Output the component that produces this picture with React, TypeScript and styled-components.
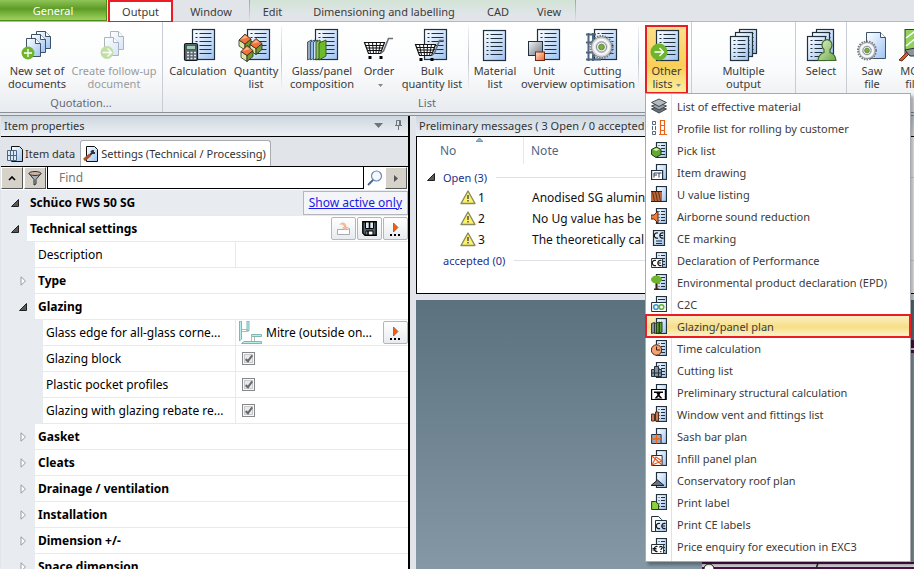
import React from 'react';
import styled, { createGlobalStyle, css } from 'styled-components';

const GlobalStyle = createGlobalStyle`
  *, *::before, *::after { box-sizing: border-box; }
  body { margin: 0; background: #e1e5e9; }
  button, input { font: inherit; color: inherit; margin: 0; }
  svg { display: block; flex: none; }
`;

/* ---------- shared drawing parts ---------- */

const INK = '#20303c';

const Defs = () => (
  <DefsSvg aria-hidden="true">
    <defs>
      <linearGradient id="paper" x1="0" y1="0" x2="1" y2="1">
        <stop offset="0.1" stopColor="#f6faff" />
        <stop offset="1" stopColor="#9dc3f2" />
      </linearGradient>
      <linearGradient id="steel" x1="0" y1="0" x2="1" y2="1">
        <stop offset="0" stopColor="#f4f5f6" />
        <stop offset="1" stopColor="#6c7581" />
      </linearGradient>
      <linearGradient id="orange" x1="0" y1="0" x2="1" y2="1">
        <stop offset="0" stopColor="#ffe3cf" />
        <stop offset="1" stopColor="#f0642a" />
      </linearGradient>
      <linearGradient id="leaf" x1="0" y1="0" x2="1" y2="1">
        <stop offset="0" stopColor="#e2f2d2" />
        <stop offset="1" stopColor="#6fa844" />
      </linearGradient>
    </defs>
  </DefsSvg>
);

type Box = { x: number; y: number; w: number; h: number };

const Sheet = ({ x, y, w, h }: Box) => {
  const rows: number[] = [];
  for (let r = y + 4; r < y + h - 2; r += 4) rows.push(r);
  return (
    <g>
      <rect x={x} y={y} width={w} height={h} fill="url(#paper)" stroke={INK} strokeWidth="1.2" />
      {rows.map((r) => (
        <path key={r} d={`M${x + 3} ${r}h2M${x + 7} ${r}h${w - 10}`} stroke={INK} />
      ))}
    </g>
  );
};

const Folded = ({ x, y, w, h }: Box) => (
  <g fill="url(#paper)" stroke="#3d5266" strokeWidth="1" strokeLinejoin="round">
    <path d={`M${x} ${y}h${w - 5}l5 5v${h - 5}h-${w}z`} />
    <path d={`M${x + w - 5} ${y}v5h5`} fill="#fff" />
  </g>
);

const Cube = ({ x, y }: { x: number; y: number }) => (
  <g stroke="#2b2b1c" strokeWidth="0.8" strokeLinejoin="round">
    <path d={`M${x - 6} ${y - 1}l6 4v6l-6-4z`} fill="#dbe8a6" />
    <path d={`M${x + 6} ${y - 2}l-6 5v6l6-5z`} fill="#6c9a2c" />
    <path d={`M${x - 6} ${y - 1}l6-6 6 5-6 5z`} fill="#f4733c" />
    <path d={`M${x - 4} ${y - 1.5}l4-4 3 2z`} fill="#ffb48c" stroke="none" />
  </g>
);

const Cart = ({ x, y }: { x: number; y: number }) => (
  <g transform={`translate(${x} ${y})`} fill="none" stroke="#111">
    <path d="M0 4.500h20l-4 11h-12z" fill="#fff" strokeWidth="1.200" />
    <path d="M1 7.500h18M2 10h16M3 12.500h14M4 4.500l2 11M8 4.500l1 11M12 4.500l-.5 11M16 4.500l-2 11" />
    <path d="M28.500.5h-4.500l-5 12.500-3 2.500" stroke="#67717c" strokeWidth="1.600" />
    <path d="M4 18h3v3H4zM15 18h3v3h-3z" fill="#000" stroke="none" />
  </g>
);

const Gear = ({ x, y, r }: { x: number; y: number; r: number }) => (
  <g>
    <circle cx={x} cy={y} r={r} fill="none" stroke="#777c82" strokeWidth="2" strokeDasharray="1.500 1.100" />
    <circle cx={x} cy={y} r={r - 0.8} fill="#d6d9dc" stroke="#85898e" strokeWidth="0.800" />
    <circle cx={x} cy={y} r={r * 0.66} fill="none" stroke="#f7f8f8" strokeWidth="2" />
    <circle cx={x} cy={y} r={r * 0.46} fill="#eceef0" stroke="#777c82" strokeWidth="0.800" />
    <circle cx={x} cy={y} r={r * 0.26} fill="#74b23a" stroke="#5f7a3f" strokeWidth="0.800" />
  </g>
);

const Badge = ({ x, y, r, arrow }: { x: number; y: number; r: number; arrow?: boolean }) => (
  <g>
    <circle cx={x} cy={y} r={r} fill="#6fb52c" />
    <path
      d={arrow ? `M${x - 4.5} ${y}h9m-4-4l4 4-4 4` : `M${x - 4} ${y}h8M${x} ${y - 4}v8`}
      fill="none"
      stroke="#fff"
      strokeWidth="1.3"
    />
  </g>
);

const SheetStack = () => (
  <g>
    <Sheet x={15.5} y={1.5} w={17} h={24} />
    <Sheet x={11.5} y={4.5} w={17} h={24} />
    <Sheet x={6.500} y={8.500} w={18} h={24} />
  </g>
);

const bigIcons: Record<string, React.ReactNode> = {
  newSet: (
    <>
      <Folded x={19.5} y={3.500} w={14} h={17} />
      <Folded x={14.5} y={6.5} w={14} h={18} />
      <Folded x={9.5} y={10.5} w={14} h={18} />
      <Badge x={11} y={25} r={6.500} />
    </>
  ),
  follow: (
    <g opacity="0.42">
      <Folded x={16.5} y={3.500} w={13} h={18} />
      <Folded x={10.500} y={9.5} w={14} h={18} />
      <Badge x={13} y={24.500} r={6.500} arrow />
    </g>
  ),
  calculation: (
    <>
      <Sheet x={14.500} y={1.500} w={22} h={30} />
      <rect x="6.500" y="15.500" width="13" height="17" rx="1.500" fill="#5d676f" stroke="#101820" strokeWidth="1.200" />
      <rect x="8.500" y="17.500" width="9" height="4" fill="#9ed0b4" stroke="#24382e" strokeWidth="0.600" />
      <path d="M9 24.500h9M9 27.500h9M9 30.500h9" stroke="#e4e7ea" strokeWidth="1.400" strokeDasharray="2 1.500" />
    </>
  ),
  quantity: (
    <>
      <Sheet x={11.500} y={1.500} w={22} h={30} />
      <Cube x={9} y={13} />
      <Cube x={20} y={17.5} />
      <Cube x={11} y={24.5} />
    </>
  ),
  glass: (
    <>
      <Sheet x={13.500} y={1.500} w={22} h={30} />
      <g stroke="#39506a" strokeWidth="0.9">
        <path d="M5.500 14l4-2v18l-4 2z" fill="#9aa9b7" />
        <path d="M8.500 14l4-2v18l-4 2z" fill="#8dbdf2" />
        <path d="M11.500 14l4-2v18l-4 2z" fill="#cfe0f4" />
        <path d="M14 14l4-2v18l-4 2z" fill="#8fc55c" stroke="#2f5414" />
        <path d="M17 15l7-3v16l-7 4z" fill="#6cbb2a" stroke="#2f5414" />
      </g>
    </>
  ),
  order: <Cart x={5.500} y={10} />,
  bulk: (
    <>
      <Sheet x={12.500} y={1.500} w={22} h={30} />
      <Cart x={3.500} y={12} />
    </>
  ),
  material: <Sheet x={8.500} y={2.500} w={22} h={30} />,
  unit: (
    <>
      <Sheet x={13.500} y={1.500} w={22} h={30} />
      <rect x="4.500" y="13.500" width="14" height="14" fill="url(#steel)" stroke={INK} />
      <rect x="11.500" y="24" width="9" height="8.500" fill="url(#orange)" stroke="#702c10" />
    </>
  ),
  cutting: (
    <>
      <Sheet x={11.500} y={1.500} w={22} h={30} />
      <path d="M5.500 5v28M10 5v28M3 6.500h10M3 14.500h8M3 24.500h8M3 31.500h15" stroke="#4d6580" strokeWidth="2" />
      <Gear x={18.500} y={19} r={11} />
    </>
  ),
  other: (
    <>
      <Sheet x={9.500} y={2.500} w={22} h={30} />
      <Badge x={12} y={24} r={8.500} arrow />
    </>
  ),
  multiple: <SheetStack />,
  select: (
    <>
      <SheetStack />
      <path d="M17 32.500c.5-5 3-7 6-8v-3a5 5.500 0 1 1 6 0v3c3.500 1 5.500 3 6 8z" fill="url(#leaf)" stroke="#3f6b28" strokeWidth="1.200" />
    </>
  ),
  saw: (
    <>
      <Folded x={14.5} y={4.500} w={19} h={26} />
      <Gear x={15} y={22.500} r={9} />
    </>
  ),
  machine: (
    <>
      <rect x="12" y="1.500" width="24" height="24" fill="#8fd15a" stroke="#2b4a1b" />
      <path d="M13 10l12-9M13 18l20-16" stroke="#fff" strokeWidth="1.500" />
      <path d="M6 32l9-9 2 2-8 8z" fill="#e2552a" stroke="#6c2d16" />
      <path d="M12 22l10-2 4 8h-9z" fill="#8d949b" stroke={INK} />
    </>
  ),
};

const BigIcon = ({ name }: { name: string }) => (
  <svg width="40" height="34" viewBox="0 0 40 34" aria-hidden="true">
    {bigIcons[name]}
  </svg>
);

/* ---------- 16px icons of the menu ---------- */

const MiniSheet = () => (
  <g>
    <rect x="5.500" y="0.500" width="10" height="15" fill="url(#paper)" stroke={INK} strokeWidth="1.200" />
    <path d="M7.500 3.500h1m1.500 0h4M7.500 6.500h1m1.500 0h4M7.500 9.500h1m1.500 0h4M7.500 12.500h1m1.500 0h4" stroke={INK} strokeWidth="1.200" />
  </g>
);
const MiniBlank = () => <rect x="5.500" y="0.500" width="10" height="15" fill="url(#paper)" stroke={INK} strokeWidth="1.200" />;
const CeMark = ({ x, y }: { x: number; y: number }) => (
  <path d={`M${x + 3.500} ${y}a2.700 2.700 0 1 0 0 5M${x + 9} ${y}a2.700 2.700 0 1 0 0 5M${x + 6} ${y + 2.500}h2.500`} fill="none" stroke="#111" strokeWidth="1.200" />
);

const miniIcons: Record<string, React.ReactNode> = {
  layers: (
    <g stroke="#343b42" strokeWidth="0.900" strokeLinejoin="round">
      <path d="M.5 11l7.500-3 7.500 3L8 15z" fill="#6d747b" />
      <path d="M.5 8l7.500-3 7.500 3L8 12z" fill="#9ba1a8" />
      <path d="M.5 4.500L8 1l7.500 3.500L8 8.500z" fill="#b4bac0" />
    </g>
  ),
  rolling: (
    <g fill="none">
      <path d="M1.500 1.500h3v3h-3zM1.500 11.500h3v3h-3zM1.500 6v4M4.500 6v4" stroke="#52677c" />
      <path d="M9.500.5h4v14h-4zM9.500 5.500h4M9.500 10.500h4M8 14.500h8" stroke="#e8641b" strokeWidth="1.200" />
    </g>
  ),
  pick: (
    <>
      <MiniSheet />
      <path d="M.5 7.500l5-2.500 4.500 2.500v5L5 15.500l-4.500-3z" fill="#62a832" stroke="#1f3d12" />
      <path d="M2 7.500L5.500 6l3 1.500L5 9z" fill="#d7efb9" />
    </>
  ),
  drawing: (
    <>
      <MiniBlank />
      <path d="M.6 6.500h11v9H.6z" fill="#fff" stroke={INK} strokeWidth="1.200" />
      <path d="M3 13.500V9h3.500M3 11h3M8 9v4.500M6.500 9h4" fill="none" stroke="#2d4257" />
    </>
  ),
  uvalue: (
    <>
      <MiniBlank />
      <path d="M0 5h11v11H0z" fill="#b8683f" />
      <path d="M0 5.500h11M0 15.500h11" stroke="#3a1c0e" />
      <path d="M1.500 6l2 9M4.500 6l2 9M7.500 6l2 9" stroke="#6b2f14" />
    </>
  ),
  sound: (
    <>
      <MiniSheet />
      <path d="M0 7h3l4-4v12l-4-4H0z" fill="#f07a3a" stroke="#5a2a12" />
    </>
  ),
  ce: (
    <>
      <rect x="2.500" y="0.500" width="11" height="15" fill="url(#paper)" stroke={INK} strokeWidth="1.200" />
      <CeMark x={3.500} y={3} />
      <path d="M5 11h6M5 13.500h6" stroke={INK} />
    </>
  ),
  declaration: (
    <>
      <MiniSheet />
      <path d="M.6 6.500h11v9H.6z" fill="#fff" stroke={INK} />
      <CeMark x={1.500} y={8.500} />
    </>
  ),
  epd: (
    <>
      <MiniSheet />
      <path d="M5.500 9v6.500M3 15.500h5" stroke="#3a2412" strokeWidth="2" />
      <ellipse cx="5.500" cy="5.500" rx="5.500" ry="4" fill="#6fb52c" />
    </>
  ),
  c2c: (
    <>
      <MiniBlank />
      <path d="M7 3.500h7" stroke={INK} />
      <path d="M.6 6.500h14.800v9H.6z" fill="#fff" stroke={INK} />
      <circle cx="5" cy="11" r="2.300" fill="none" stroke="#3a9ccb" strokeWidth="1.600" />
      <circle cx="10.500" cy="11" r="2.300" fill="none" stroke="#62b23a" strokeWidth="1.600" />
    </>
  ),
  glazing: (
    <>
      <MiniBlank />
      <path d="M.5 5.500l3-1v10l-3 1zM3.500 5.500l3-1v10l-3 1z" fill="#87909a" stroke="#333b44" />
      <path d="M5.500 5l3-1v11h-3zM8 5l3-1v10l-3 1z" fill="#5fa02a" stroke="#24451a" />
    </>
  ),
  time: (
    <>
      <MiniSheet />
      <circle cx="5.500" cy="10" r="5.200" fill="#f5a273" stroke="#4a2816" />
      <path d="M5.500 6.500V10H9" fill="none" stroke="#3a1c0e" />
    </>
  ),
  cut: (
    <>
      <MiniSheet />
      <path d="M.5 7.500h3v-3h4v3h3v7H.5z" fill="#8a949e" stroke={INK} />
      <path d="M3.500 7.500v7M7.500 7.500v7M.5 11h10" stroke={INK} />
    </>
  ),
  structural: (
    <>
      <MiniBlank />
      <path d="M0.600 5.500h13.800v10H.6z" fill="#fff" stroke="#000" strokeWidth="1.200" />
      <path d="M3 7.500h9v1.500H9.500L8.500 11l3 3.500h-8l3-3.500-1-2H3z" fill="#000" />
      <path d="M6 14l1.500-1.500L9 14z" fill="#fff" />
    </>
  ),
  vent: (
    <>
      <MiniSheet />
      <path d="M.5 8h3v7h-3zM4.500 6h3v9h-3z" fill="#c77c55" stroke="#4d3020" />
    </>
  ),
  sash: (
    <>
      <MiniBlank />
      <path d="M.6 6.500h9.500v9H.6z" fill="#9aa6b3" stroke={INK} />
      <path d="M5.500 6.500v9M.6 11h9.500" stroke="#f0641b" strokeWidth="1.300" />
    </>
  ),
  infill: (
    <>
      <MiniBlank />
      <path d="M.6 5.500h10.500v10H.6z" fill="#fff" stroke={INK} />
      <path d="M1 6l10 9M1 15l4-8 6 4z" fill="none" stroke="#e8581b" strokeWidth="1.100" />
    </>
  ),
  roof: (
    <>
      <MiniBlank />
      <path d="M0 13.500L6.500 8l6.500 5.500z" fill="#69747f" stroke="#1b2228" />
    </>
  ),
  label: (
    <>
      <MiniSheet />
      <path d="M.6 7.500h4l3 3v5h-7z" fill="#8fce3f" stroke="#1e3c12" />
    </>
  ),
  ceLabels: (
    <>
      <path d="M.6.5h7l3 3v12h-10z" fill="#fff" stroke={INK} />
      <path d="M4.500 4.500h11v11h-11z" fill="url(#paper)" stroke={INK} />
      <CeMark x={5.500} y={7.500} />
    </>
  ),
  price: (
    <>
      <MiniSheet />
      <path d="M.6 6.500h12v9H.6z" fill="#fff" stroke={INK} />
      <path d="M6.500 8.500a2.600 2.600 0 1 0 0 5M1.500 10.500h4M1.500 12h4M8.500 9.500c0-1.500 2.800-1.500 2.800 0 0 1-1.400 1-1.400 2.500M9.800 13v1.200" fill="none" stroke="#111" strokeWidth="1.100" />
    </>
  ),
};

const menuItems: [string, string][] = [
  ['layers', 'List of effective material'],
  ['rolling', 'Profile list for rolling by customer'],
  ['pick', 'Pick list'],
  ['drawing', 'Item drawing'],
  ['uvalue', 'U value listing'],
  ['sound', 'Airborne sound reduction'],
  ['ce', 'CE marking'],
  ['declaration', 'Declaration of Performance'],
  ['epd', 'Environmental product declaration (EPD)'],
  ['c2c', 'C2C'],
  ['glazing', 'Glazing/panel plan'],
  ['time', 'Time calculation'],
  ['cut', 'Cutting list'],
  ['structural', 'Preliminary structural calculation'],
  ['vent', 'Window vent and fittings list'],
  ['sash', 'Sash bar plan'],
  ['infill', 'Infill panel plan'],
  ['roof', 'Conservatory roof plan'],
  ['label', 'Print label'],
  ['ceLabels', 'Print CE labels'],
  ['price', 'Price enquiry for execution in EXC3'],
];

/* ---------- styled parts ---------- */

const DefsSvg = styled.svg`
  position: absolute;
  width: 0;
  height: 0;
`;

const Window = styled.div`
  height: 100vh;
  display: flex;
  flex-direction: column;
  overflow: hidden;
  background: #e1e5e9;
  color: #3b3b3b;
  font: 11px/13px 'Noto Sans', 'Open Sans', sans-serif;
`;

const TabBar = styled.nav`
  display: flex;
  flex: none;
  height: 22px;
  border-bottom: 1px solid #b4b9bf;
`;

const ContextTabs = styled.div`
  display: flex;
  border: solid #9cc79c;
  border-width: 0 1px;
  border-image: linear-gradient(#7fb57f, #e1e5e9) 1;
  background: linear-gradient(#d2e3d5, #e1e5e9 70%);
`;

const Tab = styled.button<{ $w: number; $kind?: 'file' | 'active' }>`
  width: ${(p) => p.$w}px;
  height: 22px;
  padding: 0;
  border: 0;
  background: none;
  white-space: nowrap;
  ${(p) =>
    p.$kind === 'file' &&
    css`
      height: 21px;
      margin-right: 1px;
      color: #fff;
      border: 1px solid #4d8a1c;
      border-width: 0 1px 1px 0;
      background: linear-gradient(#8fc556, #5d9a28 45%, #6fae35 60%, #9ed15f);
    `}
  ${(p) =>
    p.$kind === 'active' &&
    css`
      height: 23px;
      border: 2px solid #ec1c24;
      background: #fff;
    `}
`;

const Ribbon = styled.div`
  display: flex;
  flex: none;
  height: 91px;
  background: linear-gradient(#fff, #fbfcfd 50%, #e8ebef);
  border-bottom: 1px solid #8b9097;
`;

const Group = styled.section`
  display: flex;
  flex: none;
  flex-direction: column;
  min-width: 48px;
  border-right: 1px solid #c9cdd3;
`;

const GroupRow = styled.div`
  display: flex;
  flex: none;
  height: 72px;
  padding: 2px 2px 0;
`;

const GroupName = styled.div`
  text-align: center;
  height: 18px;
  padding-top: 2px;
  color: #63697a;
`;

const Divider = styled.div`
  width: 1px;
  flex: none;
  height: 64px;
  margin-top: 2px;
  background: linear-gradient(#f2f4f6, #bfc5cc 50%, #f2f4f6);
`;

const Anchor = styled.div`
  position: relative;
  margin: 0 1px 0 6px;
`;

const Tool = styled.button<{ $w: number; $muted?: boolean; $hot?: boolean }>`
  display: flex;
  flex-direction: column;
  align-items: center;
  gap: 2px;
  flex: none;
  width: ${(p) => p.$w}px;
  height: 69px;
  padding: 4px 0 0;
  border: 0;
  background: none;
  color: ${(p) => (p.$muted ? '#9b9b9b' : '#3b3b3b')};
  white-space: nowrap;
  ${(p) =>
    p.$muted &&
    css`
      margin-right: 4px;
    `}
  ${(p) =>
    p.$hot &&
    css`
      margin-top: 1px;
      padding-top: 1px;
      border: 2px solid #ec1c24;
      background: linear-gradient(#fde08a, #f9cf57 60%, #fdf0a0);
    `}
`;

const ToolLabel = styled.span`
  text-align: center;
  white-space: pre;
`;

const ArrowSvg = styled.svg`
  && { display: inline-block; vertical-align: middle; margin-left: 3px; }
`;

const Arrow = () => (
  <ArrowSvg width="5" height="3" viewBox="0 0 5 3" aria-hidden="true">
    <path d="M0 0h5L2.500 3z" fill="#888" />
  </ArrowSvg>
);

const Menu = styled.ul`
  position: absolute;
  z-index: 5;
  top: 69px;
  left: 0;
  width: 266px;
  margin: 0;
  padding: 1px 0 4px;
  list-style: none;
  border: 1px solid #a7abb0;
  background: linear-gradient(90deg, #fff 25px, #dfe1e3 25px, #dfe1e3 26px, #fff 26px);
  box-shadow: 3px 3px 3px rgba(0, 0, 0, 0.3);
`;

const MenuButton = styled.button<{ $hot?: boolean }>`
  display: flex;
  align-items: center;
  gap: 10px;
  width: 100%;
  height: 22px;
  padding: 0 5px;
  border: 0;
  background: none;
  text-align: left;
  white-space: nowrap;
  ${(p) =>
    p.$hot &&
    css`
      width: calc(100% + 2px);
      height: 24px;
      margin: -1px;
      padding: 0 4px;
      border: 2px solid #ec1c24;
      background: linear-gradient(#fbf0c4, #f7de85 55%, #fcf2cb);
    `}
`;

const Workspace = styled.div`
  display: flex;
  flex: 1;
  min-height: 0;
  margin-top: 2px;
  padding-left: 1px;
  border-top: 1px solid #8b9097;
  gap: 6px;
`;

const Side = styled.aside`
  display: flex;
  flex-direction: column;
  flex: none;
  width: 409px;
  border-right: 2px solid #000;
  color: #000;
`;

const PaneTitle = styled.h2`
  display: flex;
  align-items: center;
  flex: none;
  gap: 12px;
  height: 20px;
  margin: 0;
  padding: 0 6px 2px 3px;
  font: inherit;
  color: #333;
  white-space: nowrap;
  background: linear-gradient(#cdd6df, #edf1f5);
`;

const Grow = styled.span`
  flex: 1;
`;

const PaneTabs = styled.div`
  display: flex;
  flex: none;
  height: 31px;
  padding: 3px 0 0 3px;
  border: solid #000;
  border-width: 1px 0;
`;

const PaneTab = styled.button<{ $active?: boolean }>`
  display: flex;
  align-items: center;
  gap: 2px;
  padding: 0 4px 0 2px;
  border: 1px solid ${(p) => (p.$active ? '#a9adb2' : 'transparent')};
  border-bottom: 0;
  border-radius: 3px 3px 0 0;
  background: ${(p) => (p.$active ? '#fff' : 'none')};
  color: #333;
  white-space: nowrap;
`;

const FindRow = styled.div`
  display: flex;
  flex: none;
  height: 23px;
  padding-bottom: 1px;
  background: #fff;
`;

const ClassicButton = styled.button`
  display: flex;
  align-items: center;
  justify-content: center;
  width: 22px;
  margin-right: 1px;
  padding: 0;
  border: 1px solid;
  border-color: #fff #555 #555 #fff;
  background: #d6d2ca;
`;

const FindInput = styled.input`
  flex: 1;
  min-width: 0;
  padding: 0 11px;
  border: 1px solid #000;
  border-top: 0;
  border-radius: 0;
  background: #fff;
  font-size: 12px;
  outline: 0;
  &::placeholder { color: #767676; opacity: 1; }
`;

const FindIcon = styled.button`
  width: 21px;
  padding: 0 3px;
  border: 0;
  background: none;
`;

const Tree = styled.div`
  flex: 1;
  min-height: 0;
  overflow: hidden;
  background: #e8ecf1;
  font-size: 12px;
  line-height: 18px;
`;

const TreeRow = styled.div<{ $indent: number }>`
  display: flex;
  height: 26px;
  padding-left: ${(p) => p.$indent}px;
`;

const TreeCell = styled.div<{ $plain?: boolean; $strong?: boolean }>`
  display: flex;
  align-items: center;
  flex: 1;
  min-width: 0;
  padding-left: 3px;
  border-bottom: 1px solid #e8e9ec;
  background: ${(p) => (p.$plain ? '#e8ecf1' : '#fff')};
  white-space: nowrap;
  font-weight: ${(p) => (p.$strong ? 700 : 400)};
`;

const Value = styled.div`
  display: flex;
  align-items: center;
  align-self: stretch;
  flex: none;
  gap: 4px;
  width: 173px;
  padding-left: 3px;
  border-left: 1px solid #e8e9ec;
`;

const Toggle = styled.button`
  display: flex;
  align-items: center;
  justify-content: center;
  flex: none;
  width: 24px;
  padding: 0;
  border: 0;
  background: none;
`;

const Name = styled.label`
  flex: 1;
  min-width: 0;
`;

const SmallButton = styled.button`
  display: flex;
  align-items: center;
  justify-content: center;
  width: 25px;
  height: 23px;
  margin-left: 1px;
  padding: 0;
  border: 1px solid #b3b7bd;
  border-radius: 2px;
  background: linear-gradient(#fff, #e8ebef);
`;

const ActiveLink = styled.a`
  padding: 2px 5px;
  border: 1px solid #b3b7bd;
  background: #f3f5f8;
  color: #1a1ae6;
  font-weight: 400;
  text-decoration: underline;
`;

const Check = styled.input`
  appearance: none;
  display: flex;
  justify-content: center;
  width: 13px;
  height: 13px;
  margin-left: 3px;
  border: 1px solid #858789;
  background: #e9eaeb;
  box-shadow: inset 0 0 0 1px #f8f8f8, inset 0 0 0 2px #c6c8ca;
  &:checked::after {
    content: '';
    width: 4px;
    height: 8px;
    margin-top: 1px;
    border: solid #66696d;
    border-width: 0 2px 2px 0;
    transform: rotate(38deg);
  }
`;

const Main = styled.main`
  display: flex;
  flex-direction: column;
  flex: 1;
  min-width: 0;
`;

const Messages = styled.section`
  flex: none;
  height: 158px;
  margin-bottom: 6px;
  overflow: hidden;
  border: 1px solid #000;
  border-right: 0;
  background: #fff;
  font-size: 12px;
  color: #111;
`;

const MessageHead = styled.div`
  display: grid;
  grid-template-columns: 107px 1fr;
  height: 27px;
  margin-bottom: 3px;
  line-height: 27px;
  color: #4f6785;
`;

const HeadCell = styled.div<{ $first?: boolean }>`
  display: flex;
  gap: 20px;
  padding-left: ${(p) => (p.$first ? 23 : 7)}px;
  border-right: ${(p) => (p.$first ? '1px solid #e3e8ee' : '0')};
`;

const MessageGroup = styled.div`
  display: flex;
  align-items: center;
  gap: 9px;
  height: 20px;
  padding-left: 10px;
  color: #1c2f8c;
  font-size: 11px;
  &::after { content: ''; flex: 1; height: 1px; background: #dde0e4; }
`;

const Glyph = styled.span`
  width: 7px;
`;

const Message = styled.div`
  display: grid;
  grid-template-columns: 18px 54px 1fr;
  align-items: center;
  height: 21px;
  padding-left: 43px;
  white-space: nowrap;
`;

const Canvas = styled.div`
  display: flex;
  flex: 1;
  min-height: 0;
  justify-content: flex-end;
  overflow: hidden;
  background: linear-gradient(#5b717d, #8499a5);
`;

/* ---------- small glyphs ---------- */

const Open = () => (
  <svg width="8" height="8" viewBox="0 0 8 8" aria-hidden="true">
    <path d="M7.500.5v7h-7z" fill="#595959" stroke="#222" />
  </svg>
);
const Closed = () => (
  <svg width="7" height="10" viewBox="0 0 7 10" aria-hidden="true">
    <path d="M1 .8v8.400L5.500 5z" fill="#fff" stroke="#9a9a9a" />
  </svg>
);
const Play = () => (
  <svg width="13" height="16" viewBox="0 0 13 16" aria-hidden="true">
    <path d="M4.500 2v9L9 6.500z" fill="#ff5a00" stroke="#6a5a50" strokeWidth="0.700" />
    <path d="M1 13h2v2H1zM5 13h2v2H5zM9 13h2v2H9z" fill="#000" />
  </svg>
);
const Warning = () => (
  <svg width="16" height="15" viewBox="0 0 16 15" aria-hidden="true">
    <path d="M8 1l7 12.500H1z" fill="#fbf36a" stroke="#8b8960" strokeWidth="1.400" strokeLinejoin="round" />
    <path d="M8 5v4M8 10v1.500" stroke="#444" strokeWidth="1.400" />
  </svg>
);
const MitreIcon = () => (
  <svg width="23" height="24" viewBox="0 0 23 24" aria-hidden="true">
    <g fill="#b9eeee" stroke="#6fa3a5" strokeWidth="0.800">
      <path d="M.5 0v20l2-2V0zM8 0v10h2V0zM2.500 22.500h20v-2H5z" />
      <path d="M12.500 13.500h10v2h-10z" />
    </g>
    <path d="M3 8.500h5v2H3M12.500 16v4.500h3V16" fill="none" stroke="#a9a98c" strokeWidth="0.800" />
  </svg>
);

const ToolButton = (p: { icon: string; label: string; w: number; muted?: boolean; hot?: boolean; arrow?: boolean }) => (
  <Tool $w={p.w} $muted={p.muted} $hot={p.hot}>
    <BigIcon name={p.icon} />
    <ToolLabel>
      {p.label}
      {p.arrow && <Arrow />}
    </ToolLabel>
  </Tool>
);

const BranchRow = ({ name, open }: { name: string; open?: boolean }) => (
  <TreeRow $indent={10}>
    <Toggle aria-label={`Toggle ${name}`}>{open ? <Open /> : <Closed />}</Toggle>
    <TreeCell $strong>
      <Name as="span">{name}</Name>
    </TreeCell>
  </TreeRow>
);

const CheckRow = ({ id, name }: { id: string; name: string }) => (
  <TreeRow $indent={42}>
    <TreeCell>
      <Name htmlFor={id}>{name}</Name>
      <Value>
        <Check id={id} type="checkbox" defaultChecked />
      </Value>
    </TreeCell>
  </TreeRow>
);

export default function App() {
  return (
    <Window>
      <GlobalStyle />
      <Defs />
      <TabBar>
        <Tab $w={107} $kind="file">General</Tab>
        <Tab $w={65} $kind="active">Output</Tab>
        <Tab $w={76}>Window</Tab>
        <ContextTabs>
          <Tab $w={45}>Edit</Tab>
          <Tab $w={178}>Dimensioning and labelling</Tab>
          <Tab $w={50}>CAD</Tab>
          <Tab $w={52}>View</Tab>
        </ContextTabs>
      </TabBar>

      <Ribbon>
        <Group>
          <GroupRow>
            <ToolButton icon="newSet" label={'New set of\ndocuments'} w={70} />
            <ToolButton icon="follow" label={'Create follow-up\ndocument'} w={84} muted />
          </GroupRow>
          <GroupName>Quotation...</GroupName>
        </Group>
        <Group>
          <GroupRow>
            <ToolButton icon="calculation" label="Calculation" w={66} />
            <ToolButton icon="quantity" label={'Quantity\nlist'} w={50} />
            <Divider />
            <ToolButton icon="glass" label={'Glass/panel\ncomposition'} w={80} />
            <ToolButton icon="order" label={'Order\n'} w={34} arrow />
            <ToolButton icon="bulk" label={'Bulk\nquantity list'} w={72} />
            <Divider />
            <ToolButton icon="material" label={'Material\nlist'} w={52} />
            <ToolButton icon="unit" label={'Unit\noverview'} w={46} />
            <ToolButton icon="cutting" label={'Cutting\noptimisation'} w={71} />
            <Divider />
            <Anchor>
              <ToolButton icon="other" label={'Other\nlists'} w={43} hot arrow />
              <Menu>
                {menuItems.map(([icon, text]) => (
                  <li key={icon}>
                    <MenuButton $hot={icon === 'glazing'}>
                      <svg width="16" height="16" viewBox="0 0 16 16" aria-hidden="true">
                        {miniIcons[icon]}
                      </svg>
                      {text}
                    </MenuButton>
                  </li>
                ))}
              </Menu>
            </Anchor>
          </GroupRow>
          <GroupName>List</GroupName>
        </Group>
        <Group>
          <GroupRow>
            <ToolButton icon="multiple" label={'Multiple\noutput'} w={99} />
          </GroupRow>
        </Group>
        <Group>
          <GroupRow>
            <ToolButton icon="select" label="Select" w={46} />
          </GroupRow>
        </Group>
        <Group>
          <GroupRow>
            <ToolButton icon="saw" label={'Saw\nfile'} w={46} />
            <ToolButton icon="machine" label={'MCO\nfile'} w={36} />
          </GroupRow>
        </Group>
      </Ribbon>

      <Workspace>
        <Side>
          <PaneTitle>
            Item properties
            <Grow />
            <svg width="9" height="5" viewBox="0 0 9 5" aria-hidden="true">
              <path d="M0 0h9L4.500 5z" fill="#6f757c" />
            </svg>
            <svg width="7" height="10" viewBox="0 0 7 10" aria-hidden="true">
              <path d="M1.500 5.500v-5h4v5M4.500 1v4.500M0 5.500h7M3.500 6v4" fill="none" stroke="#6f757c" />
            </svg>
          </PaneTitle>
          <PaneTabs>
            <PaneTab>
              <svg width="16" height="16" viewBox="0 0 16 16" aria-hidden="true">
                <path d="M4.500.5h8l3 3v12h-11z" fill="url(#paper)" stroke="#111" />
                <path d="M.5 4.500h9v10h-9zM3.500 4.500v10M6.500 4.500v10M.5 9.500h9" fill="#dbe8f6" stroke="#4c6580" />
              </svg>
              Item data
            </PaneTab>
            <PaneTab $active>
              <svg width="16" height="16" viewBox="0 0 16 16" aria-hidden="true">
                <path d="M3.500.5h8l3 3v12h-11z" fill="url(#paper)" stroke="#111" />
                <path d="M1 14l6-5" stroke="#a8522c" strokeWidth="3" />
                <path d="M7 9l3-3M8 5l2 2h2M10 4v2" fill="none" stroke="#30363c" strokeWidth="1.800" />
              </svg>
              Settings (Technical / Processing)
            </PaneTab>
          </PaneTabs>
          <FindRow>
            <ClassicButton aria-label="Collapse">
              <svg width="8" height="5" viewBox="0 0 8 5" aria-hidden="true">
                <path d="M1 4l3-3 3 3" fill="none" stroke="#000" strokeWidth="1.600" />
              </svg>
            </ClassicButton>
            <ClassicButton aria-label="Filter">
              <svg width="14" height="15" viewBox="0 0 14 15" aria-hidden="true">
                <path d="M1 2.500l5 6V14l2-1V8.500l5-6z" fill="#a7b0b7" stroke="#333" />
                <ellipse cx="7" cy="2.500" rx="6" ry="2" fill="#c9b3a5" stroke="#333" />
              </svg>
            </ClassicButton>
            <FindInput placeholder="Find" aria-label="Find" />
            <FindIcon aria-label="Search">
              <svg width="16" height="16" viewBox="0 0 16 16" aria-hidden="true">
                <circle cx="9.500" cy="6" r="5" fill="#f4f8fc" stroke="#6b8db4" strokeWidth="1.200" />
                <path d="M6 10l-5 5" stroke="#44658c" strokeWidth="1.800" />
              </svg>
            </FindIcon>
            <ClassicButton aria-label="Next">
              <svg width="4" height="7" viewBox="0 0 4 7" aria-hidden="true">
                <path d="M0 0v7l4-3.500z" fill="#555" />
              </svg>
            </ClassicButton>
          </FindRow>
          <Tree>
            <TreeRow $indent={2}>
              <Toggle aria-label="Toggle Schüco FWS 50 SG"><Open /></Toggle>
              <TreeCell $plain $strong>
                <Name as="span">Schüco FWS 50 SG</Name>
                <ActiveLink href="#active">Show active only</ActiveLink>
              </TreeCell>
            </TreeRow>
            <TreeRow $indent={2}>
              <Toggle aria-label="Toggle Technical settings"><Open /></Toggle>
              <TreeCell $strong>
                <Name as="span">Technical settings</Name>
                <SmallButton aria-label="Load">
                  <svg width="15" height="15" viewBox="0 0 15 15" aria-hidden="true">
                    <path d="M1.500 8.500h10l2-1v6h-12z" fill="#fff" stroke="#aaa" />
                    <path d="M3 4c3-4 7-3 7.500 2h2.500l-4 3.500L6 6h2c0-2-2-3-5-2z" fill="#f6b996" />
                  </svg>
                </SmallButton>
                <SmallButton aria-label="Save">
                  <svg width="15" height="15" viewBox="0 0 15 15" aria-hidden="true">
                    <path d="M.8.8h13.400v13.400H3L.8 12z" fill="#53606c" stroke="#000" strokeWidth="1.400" />
                    <path d="M3.500 1h8v6.500h-8z" fill="#dfe9f2" stroke="#000" />
                    <path d="M4 10h7v4H4z" fill="#fff" stroke="#000" />
                    <path d="M7.500 1v6M6 10v4" stroke="#000" strokeWidth="1.600" />
                  </svg>
                </SmallButton>
                <SmallButton aria-label="More settings"><Play /></SmallButton>
              </TreeCell>
            </TreeRow>
            <TreeRow $indent={34}>
              <TreeCell>
                <Name as="span">Description</Name>
                <Value />
              </TreeCell>
            </TreeRow>
            <BranchRow name="Type" />
            <BranchRow name="Glazing" open />
            <TreeRow $indent={42}>
              <TreeCell>
                <Name as="span">Glass edge for all-glass corne...</Name>
                <Value>
                  <MitreIcon />
                  <Grow>Mitre (outside on...</Grow>
                  <SmallButton aria-label="Choose glass edge"><Play /></SmallButton>
                </Value>
              </TreeCell>
            </TreeRow>
            <CheckRow id="block" name="Glazing block" />
            <CheckRow id="pocket" name="Plastic pocket profiles" />
            <CheckRow id="rebate" name="Glazing with glazing rebate re..." />
            <BranchRow name="Gasket" />
            <BranchRow name="Cleats" />
            <BranchRow name="Drainage / ventilation" />
            <BranchRow name="Installation" />
            <BranchRow name="Dimension +/-" />
            <BranchRow name="Space dimension" />
          </Tree>
        </Side>

        <Main>
          <PaneTitle>Preliminary messages ( 3 Open / 0 accepted )</PaneTitle>
          <Messages>
            <MessageHead>
              <HeadCell $first>
                No
                <svg width="7" height="5" viewBox="0 0 7 5" aria-hidden="true">
                  <path d="M0 4.500L3.500 1 7 4.500z" fill="#8dbbd6" stroke="#4f7f9c" strokeWidth="0.700" />
                </svg>
              </HeadCell>
              <HeadCell>Note</HeadCell>
            </MessageHead>
            <MessageGroup><Glyph><Open /></Glyph>Open (3)</MessageGroup>
            <Message><Warning /><span>1</span><span>Anodised SG alumin</span></Message>
            <Message><Warning /><span>2</span><span>No Ug value has be</span></Message>
            <Message><Warning /><span>3</span><span>The theoretically cal</span></Message>
            <MessageGroup><Glyph />accepted (0)</MessageGroup>
          </Messages>
          <Canvas>
            <svg width="212" height="269" viewBox="0 0 212 269" aria-hidden="true">
              <path d="M0 40h212v229H0z" fill="#8d9aa3" />
              <path d="M0 40h212v8H0zM0 50h212v3H0z" fill="#4a1048" />
              <path d="M0 48h212v2H0z" fill="#ddd" />
              <path d="M0 262h212v7H0z" fill="#d9d0d9" />
              <path d="M0 262h212v2H0zM0 267h212v2H0z" fill="#4a1048" />
              <circle cx="7" cy="269" r="5" fill="#fff" stroke="#222" />
              <path d="M114 269l2-6" stroke="#222" strokeWidth="1.500" />
            </svg>
          </Canvas>
        </Main>
      </Workspace>
    </Window>
  );
}
